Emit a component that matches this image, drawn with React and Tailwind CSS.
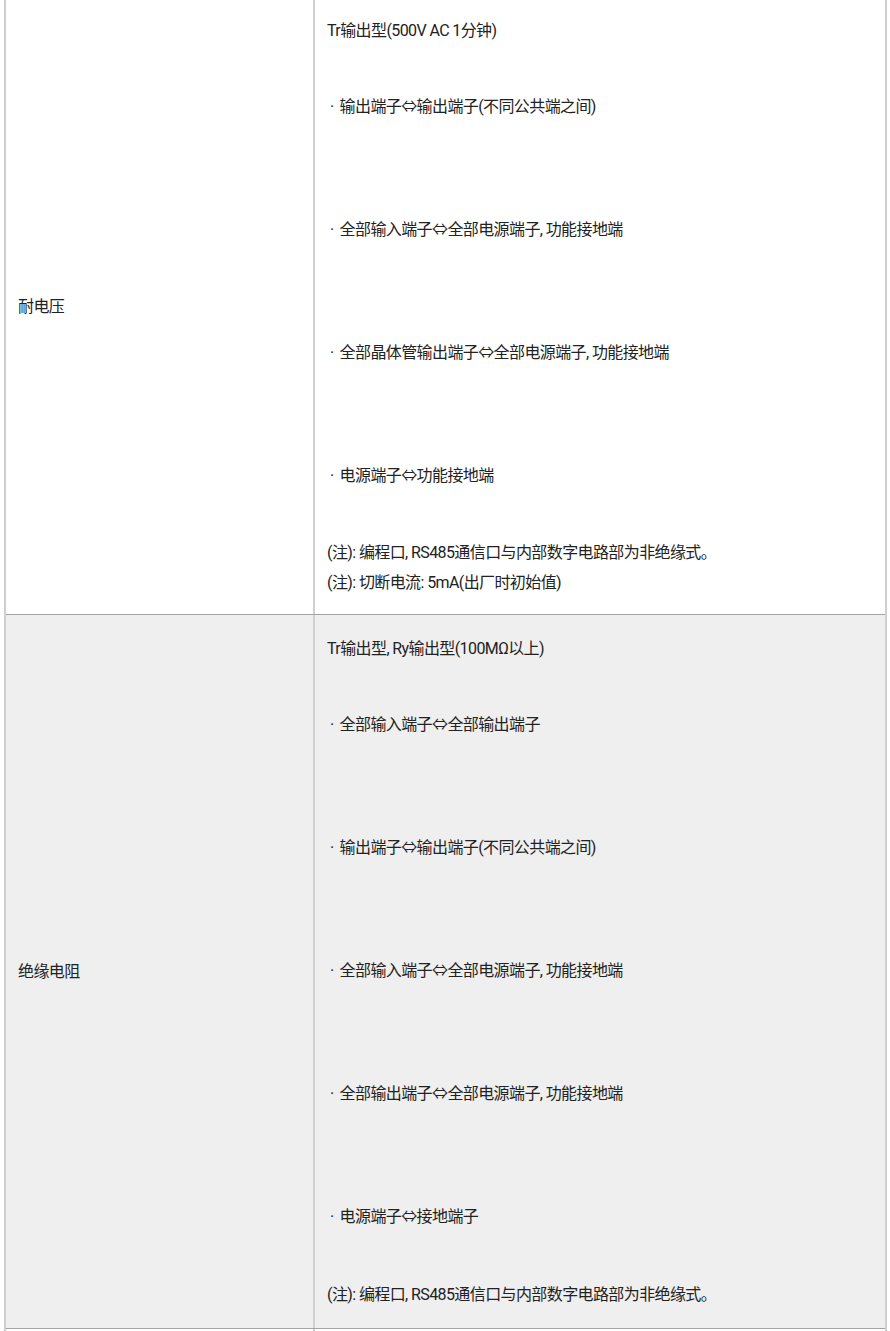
import React from 'react';

const rows = [
  {
    label: '耐电压',
    bg: 'bg-white',
    head: 'Tr输出型(500V AC 1分钟)',
    items: [
      '输出端子⇔输出端子(不同公共端之间)',
      '全部输入端子⇔全部电源端子, 功能接地端',
      '全部晶体管输出端子⇔全部电源端子, 功能接地端',
      '电源端子⇔功能接地端',
    ],
    notes: ['(注): 编程口, RS485通信口与内部数字电路部为非绝缘式。', '(注): 切断电流: 5mA(出厂时初始值)'],
    pad: 'pt-[16px] pb-[16px]',
    noteGap: 'mt-[47px]',
  },
  {
    label: '绝缘电阻',
    bg: 'bg-[#efefef]',
    head: 'Tr输出型, Ry输出型(100MΩ以上)',
    items: [
      '全部输入端子⇔全部输出端子',
      '输出端子⇔输出端子(不同公共端之间)',
      '全部输入端子⇔全部电源端子, 功能接地端',
      '全部输出端子⇔全部电源端子, 功能接地端',
      '电源端子⇔接地端子',
    ],
    notes: ['(注): 编程口, RS485通信口与内部数字电路部为非绝缘式。'],
    pad: 'pt-[19px] pb-[18px]',
    noteGap: 'mt-[48px]',
  },
];

const Row = ({ row }) => (
  <div className={`grid grid-cols-[309px_1fr] border-b border-[#a3a3a3] ${row.bg}`}>
    <div className="flex items-center pl-[12px] border-r-2 border-[#d0d0d0]">
      <span>{row.label}</span>
    </div>
    <div className={`pl-[12px] ${row.pad}`}>
      <p className="h-[30px]">{row.head}</p>
      {row.items.map((t, i) => (
        <p key={i} className={`h-[30px] pl-[3px] ${i === 0 ? 'mt-[46px]' : 'mt-[93px]'}`}>
          <span className="mr-[6px]">·</span>
          {t}
        </p>
      ))}
      {row.notes.map((n, i) => (
        <p key={n} className={`h-[30px] ${i === 0 ? row.noteGap : ''}`}>
          {n}
        </p>
      ))}
    </div>
  </div>
);

export default function App() {
  return (
    <div
      className="w-[890px] h-[1331px] overflow-hidden bg-white text-[16px] leading-[30px] tracking-[-0.6px] text-[#222]"
      style={{ fontFamily: 'Roboto, "Noto Sans CJK SC", sans-serif' }}
    >
      <div className="ml-[4px] w-[883px] border-x-2 border-[#cfcfcf]">
        {rows.map((r) => (
          <Row key={r.label} row={r} />
        ))}
        <div className="grid grid-cols-[309px_1fr] h-[10px]">
          <div className="border-r-2 border-[#d0d0d0]" />
          <div />
        </div>
      </div>
    </div>
  );
}
